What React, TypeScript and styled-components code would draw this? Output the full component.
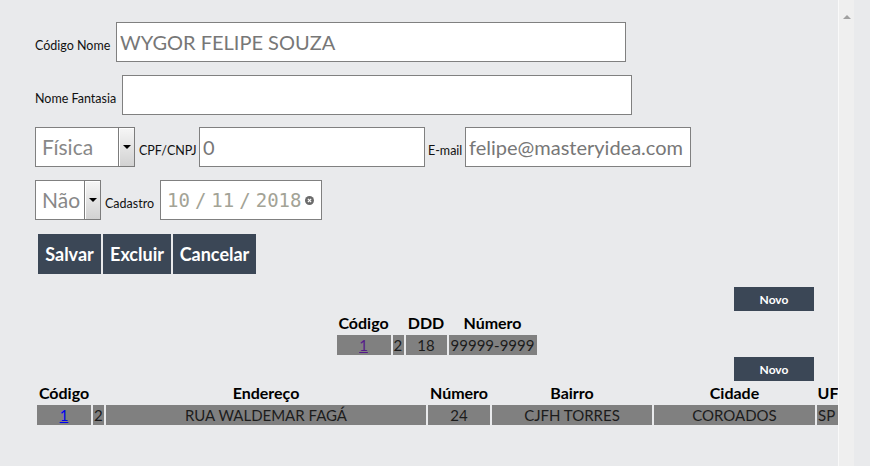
import React from "react";
import styled, { createGlobalStyle } from "styled-components";

const Global = createGlobalStyle`
  html, body { margin: 0; padding: 0; background: #e9eaec; }
  body { font-family: "Lato", "Open Sans", sans-serif; overflow: hidden; }
  * { box-sizing: border-box; }
`;

const Page = styled.div`
  display: flex;
  width: 870px;
  height: 466px;
  background: #e9eaec;
`;

const Panel = styled.main`
  flex: none;
  width: 838px;
  height: 466px;
  overflow: hidden;
  padding: 22px 0 0 35px;
  display: flex;
  flex-direction: column;
  align-items: flex-start;
`;

const Scrollbar = styled.div`
  flex: none;
  width: 16px;
  height: 466px;
  background: #efefef;
  border-left: 1px solid #f9f9f9;
  display: flex;
  justify-content: center;
  padding-top: 15px;
`;

const ScrollArrow = styled.div`
  width: 0;
  height: 0;
  border-left: 4px solid transparent;
  border-right: 4px solid transparent;
  border-bottom: 4px solid #a0a0a0;
`;

const FormRow = styled.div<{ $mb: number }>`
  display: flex;
  align-items: baseline;
  gap: 3px;
  height: 40px;
  margin-bottom: ${(p) => p.$mb}px;
`;

const Label = styled.label<{ $w: number }>`
  width: ${(p) => p.$w}px;
  flex: none;
  font-size: 12.5px;
  color: #111;
  white-space: nowrap;
`;

const TextInput = styled.input<{ $w: number }>`
  width: ${(p) => p.$w}px;
  height: 40px;
  border: 1px solid #808080;
  background: #fff;
  font-family: "Lato", "Open Sans", sans-serif;
  font-size: 20px;
  color: #777;
  padding: 0 3px;
  outline: none;
  margin: 0;
`;

const SelectBox = styled.div<{ $w: number }>`
  width: ${(p) => p.$w}px;
  height: 40px;
  border: 1px solid #808080;
  background: #fff;
  display: flex;
  align-items: baseline;
  font-size: 21px;
  line-height: 38px;
  color: #888;
`;

const SelectText = styled.span`
  flex: 1;
  padding-left: 6px;
  white-space: nowrap;
`;

const SelectArrow = styled.span`
  align-self: stretch;
  width: 17px;
  margin: -1px -1px -1px 0;
  border: 1px solid #7c7c7c;
  background: linear-gradient(#f6f6f6, #d2d2d2);
  box-shadow: inset 1px 1px 0 #ffffff;
  display: flex;
  align-items: center;
  justify-content: center;
  &::after {
    content: "";
    border-left: 4px solid transparent;
    border-right: 4px solid transparent;
    border-top: 4px solid #000;
  }
`;

const DateBox = styled.div`
  align-self: center;
  width: 162px;
  height: 40px;
  border: 1px solid #808080;
  background: #fff;
  display: flex;
  align-items: center;
  gap: 5px;
  padding-left: 6px;
  font-family: "DejaVu Sans Mono", monospace;
  font-size: 19px;
  color: #a3a396;
`;

const DateSeg = styled.span``;

const ClearIcon = styled.svg`
  margin-left: -1px;
  flex: none;
`;

const ButtonBar = styled.div`
  display: flex;
  gap: 2px;
  margin: 1px 0 0 3px;
`;

const ActionButton = styled.button<{ $w: number }>`
  width: ${(p) => p.$w}px;
  height: 40px;
  border: none;
  margin: 0;
  padding: 0;
  background: #3b4756;
  color: #fff;
  font-family: "Lato", "Open Sans", sans-serif;
  font-weight: 700;
  font-size: 18px;
`;

const NewButton = styled.button<{ $mt: number }>`
  align-self: flex-end;
  margin: ${(p) => p.$mt}px 24px 0 0;
  width: 80px;
  height: 24px;
  border: none;
  padding: 0;
  background: #3b4756;
  color: #fff;
  font-family: "Lato", "Open Sans", sans-serif;
  font-weight: 700;
  font-size: 12px;
`;

const Table = styled.table<{ $w: number; $center?: boolean }>`
  width: ${(p) => p.$w}px;
  flex: none;
  table-layout: fixed;
  border-collapse: separate;
  border-spacing: 2px;
  margin: ${(p) => (p.$center ? "0 auto" : "0")};
  align-self: ${(p) => (p.$center ? "center" : "flex-start")};
  font-size: 15px;
`;

const Th = styled.th`
  height: 20px;
  padding: 0;
  line-height: 20px;
  font-weight: 700;
  font-size: 16px;
  color: #000;
  text-align: center;
  white-space: nowrap;
`;

const Td = styled.td<{ $align?: string }>`
  height: 20px;
  padding: 0 1px;
  line-height: 20px;
  background: #808080;
  color: #1c1c1c;
  text-align: ${(p) => p.$align || "center"};
  white-space: nowrap;
  overflow: hidden;
`;

const CellLink = styled.a<{ $visited?: boolean }>`
  color: ${(p) => (p.$visited ? "#551a8b" : "#0000ee")};
  text-decoration: underline;
`;

const phoneCols = [54, 11, 41, 88];
const addrCols = [54, 11, 320, 62, 160, 161, 22];

export default function App() {
  return (
    <>
      <Global />
      <Page>
        <Panel>
          <FormRow $mb={13}>
            <Label $w={78}>Código Nome</Label>
            <TextInput $w={510} readOnly defaultValue="WYGOR FELIPE SOUZA" />
          </FormRow>
          <FormRow $mb={12}>
            <Label $w={84}>Nome Fantasia</Label>
            <TextInput $w={510} readOnly defaultValue="" />
          </FormRow>
          <FormRow $mb={13}>
            <SelectBox $w={100}>
              <SelectText>Física</SelectText>
              <SelectArrow />
            </SelectBox>
            <Label $w={57} style={{ marginLeft: 1 }}>CPF/CNPJ</Label>
            <TextInput $w={226} readOnly defaultValue="0" />
            <Label $w={34}>E-mail</Label>
            <TextInput $w={226} readOnly defaultValue="felipe@masteryidea.com" />
          </FormRow>
          <FormRow $mb={13}>
            <SelectBox $w={66}>
              <SelectText>Não</SelectText>
              <SelectArrow />
            </SelectBox>
            <Label $w={52} style={{ marginLeft: 1 }}>Cadastro</Label>
            <DateBox>
              <DateSeg>10</DateSeg>
              <DateSeg>/</DateSeg>
              <DateSeg>11</DateSeg>
              <DateSeg>/</DateSeg>
              <DateSeg>2018</DateSeg>
              <ClearIcon width="9" height="9" viewBox="0 0 10 10">
                <circle cx="5" cy="5" r="5" fill="#6b6b6b" />
                <path d="M3.2 3.2 L6.8 6.8 M6.8 3.2 L3.2 6.8" stroke="#fff" strokeWidth="1.4" />
              </ClearIcon>
            </DateBox>
          </FormRow>
          <ButtonBar>
            <ActionButton $w={63}>Salvar</ActionButton>
            <ActionButton $w={68}>Excluir</ActionButton>
            <ActionButton $w={83}>Cancelar</ActionButton>
          </ButtonBar>

          <NewButton $mt={13}>Novo</NewButton>
          <Table $w={204} $center>
            <colgroup>
              {phoneCols.map((w, i) => (
                <col key={i} style={{ width: w }} />
              ))}
            </colgroup>
            <thead>
              <tr>
                <Th>Código</Th>
                <Th />
                <Th>DDD</Th>
                <Th>Número</Th>
              </tr>
            </thead>
            <tbody>
              <tr>
                <Td>
                  <CellLink $visited href="#">1</CellLink>
                </Td>
                <Td $align="left">2</Td>
                <Td>18</Td>
                <Td>99999-9999</Td>
              </tr>
            </tbody>
          </Table>

          <NewButton $mt={0}>Novo</NewButton>
          <Table $w={806}>
            <colgroup>
              {addrCols.map((w, i) => (
                <col key={i} style={{ width: w }} />
              ))}
            </colgroup>
            <thead>
              <tr>
                <Th>Código</Th>
                <Th />
                <Th>Endereço</Th>
                <Th>Número</Th>
                <Th>Bairro</Th>
                <Th>Cidade</Th>
                <Th>UF</Th>
              </tr>
            </thead>
            <tbody>
              <tr>
                <Td>
                  <CellLink href="#">1</CellLink>
                </Td>
                <Td $align="left">2</Td>
                <Td>RUA WALDEMAR FAGÁ</Td>
                <Td>24</Td>
                <Td>CJFH TORRES</Td>
                <Td>COROADOS</Td>
                <Td $align="left">SP</Td>
              </tr>
            </tbody>
          </Table>
        </Panel>
        <Scrollbar>
          <ScrollArrow />
        </Scrollbar>
      </Page>
    </>
  );
}
